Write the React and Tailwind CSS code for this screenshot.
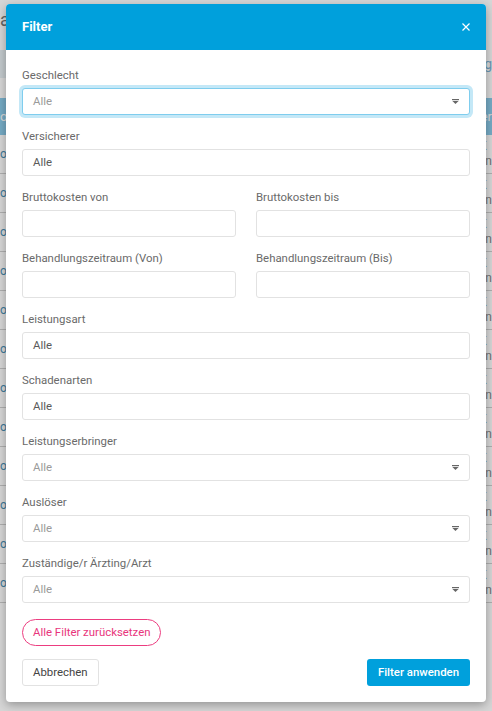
import React from "react";

function Caret() {
  return (
    <svg width="7" height="5" viewBox="0 0 7 5" className="shrink-0">
      <rect x="0" y="0" width="7" height="1.2" fill="#666" />
      <path d="M0.4 1.9 H6.6 L3.5 5 Z" fill="#666" />
    </svg>
  );
}

function Label({ children }) {
  return <div className="mb-1 text-[11.4px] leading-[18px] text-[#6a6a6a]">{children}</div>;
}

function TextBox({ value }) {
  return (
    <div className="flex h-[27px] items-center rounded-[3px] border border-[#e2e2e2] bg-white px-[10px] text-[11.4px] text-[#5a5a5a]">
      {value}
    </div>
  );
}

function SelectBox({ focused }) {
  return (
    <div
      className={
        focused
          ? "flex h-[27px] items-center justify-between rounded-[3px] border border-[#7fcdee] bg-white pl-[10px] pr-[10px] text-[11.4px] text-[#9a9a9a] shadow-[0_0_0_3px_#c4e8f7]"
          : "flex h-[27px] items-center justify-between rounded-[3px] border border-[#e2e2e2] bg-white pl-[10px] pr-[10px] text-[11.4px] text-[#9a9a9a]"
      }
    >
      <span>Alle</span>
      <Caret />
    </div>
  );
}

function Field({ label, children }) {
  return (
    <div>
      <Label>{label}</Label>
      {children}
    </div>
  );
}

function BgRow() {
  return (
    <div className="flex h-[39px] items-center justify-between border-b border-[#d0d0d0] text-[12px]">
      <span className="text-[#4a8fb5]">o c</span>
      <div className="flex flex-col items-start leading-[15px]">
        <span className="font-bold text-[#555]">K</span>
        <span className="text-[#888]">an</span>
      </div>
    </div>
  );
}

export default function App() {
  const rows = Array.from({ length: 12 }, (_, i) => i);
  return (
    <div className="relative h-[711px] w-full overflow-hidden bg-white [font-family:Roboto,sans-serif]">
      {/* background page */}
      <div className="flex flex-col">
        <div className="flex h-[50px] items-start pt-[6px] text-[18px] text-[#777]">
          <span>a</span>
        </div>
        <div className="flex h-[28px] items-center justify-between">
          <div className="h-full w-[40px] bg-[#e8f0f4]"></div>
          <span className="text-[14px] text-[#7fb4d6]">ng</span>
        </div>
        <div className="h-[20px]"></div>
        <div className="flex h-[37px] items-center justify-between bg-[#8ccbea] text-[13px] text-white">
          <span>oh</span>
          <span>er</span>
        </div>
        {rows.map((i) => (
          <BgRow key={i} />
        ))}
      </div>
      <div className="absolute inset-0 bg-black/[0.16]"></div>

      {/* modal */}
      <div className="absolute left-[6px] top-[4px] w-[480px] rounded-[4px] bg-white shadow-[0_3px_10px_rgba(0,0,0,0.3)]">
        <div className="flex h-[46px] items-center justify-between rounded-t-[4px] bg-[#00a0dc] px-4">
          <span className="text-[13px] font-bold text-white">Filter</span>
          <svg width="8" height="8" viewBox="0 0 8 8">
            <path d="M0.5 0.5 L7.5 7.5 M7.5 0.5 L0.5 7.5" stroke="#fff" strokeWidth="1.2" />
          </svg>
        </div>
        <div className="flex flex-col gap-[12px] px-4 pt-4">
          <Field label="Geschlecht">
            <SelectBox focused />
          </Field>
          <Field label="Versicherer">
            <TextBox value="Alle" />
          </Field>
          <div className="grid grid-cols-2 gap-x-[20px]">
            <Field label="Bruttokosten von">
              <TextBox value="" />
            </Field>
            <Field label="Bruttokosten bis">
              <TextBox value="" />
            </Field>
          </div>
          <div className="grid grid-cols-2 gap-x-[20px]">
            <Field label="Behandlungszeitraum (Von)">
              <TextBox value="" />
            </Field>
            <Field label="Behandlungszeitraum (Bis)">
              <TextBox value="" />
            </Field>
          </div>
          <Field label="Leistungsart">
            <TextBox value="Alle" />
          </Field>
          <Field label="Schadenarten">
            <TextBox value="Alle" />
          </Field>
          <Field label="Leistungserbringer">
            <SelectBox />
          </Field>
          <Field label="Auslöser">
            <SelectBox />
          </Field>
          <Field label="Zuständige/r Ärzting/Arzt">
            <SelectBox />
          </Field>
        </div>
        <div className="px-4 pt-4">
          <button className="flex h-[27px] items-center rounded-full border border-[#ec3d80] px-[10px] text-[11.4px] text-[#e8357c]">
            Alle Filter zurücksetzen
          </button>
        </div>
        <div className="flex items-center justify-between px-4 pb-4 pt-[13px]">
          <button className="flex h-[27px] items-center rounded-[3px] border border-[#e2e2e2] bg-white px-[10px] text-[11.4px] text-[#444]">
            Abbrechen
          </button>
          <button className="flex h-[27px] items-center rounded-[3px] bg-[#00a0dc] px-[11px] text-[11.4px] font-medium text-white">
            Filter anwenden
          </button>
        </div>
      </div>
    </div>
  );
}
